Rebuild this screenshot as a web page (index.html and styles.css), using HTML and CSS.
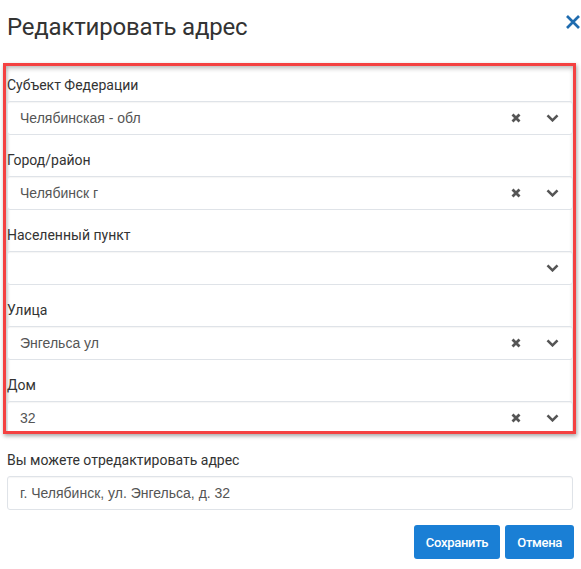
FILE: index.html
```html
<!DOCTYPE html>
<html lang="ru">
<head>
<meta charset="utf-8">
<title>Редактировать адрес</title>
<link rel="stylesheet" href="styles.css">
</head>
<body>
<div class="dialog">
  <div class="header">
    <h1 class="title">Редактировать адрес</h1>
    <button class="close" aria-label="Закрыть">
      <svg width="16" height="16" viewBox="0 0 16 16"><path d="M2 2 L14 14 M14 2 L2 14" stroke="#1f6caf" stroke-width="2.7" fill="none"/></svg>
    </button>
  </div>

  <div class="panel">
    <div class="field">
      <div class="label">Субъект Федерации</div>
      <div class="select">
        <span class="value">Челябинская - обл</span>
        <svg class="clear" width="10" height="10" viewBox="0 0 10 10"><path d="M1.5 1.5 L8.5 8.5 M8.5 1.5 L1.5 8.5" stroke="#555" stroke-width="2.8" fill="none"/></svg>
        <svg class="chev" width="13" height="8" viewBox="0 0 13 8"><path d="M1.5 1.3 L6.5 6.3 L11.5 1.3" stroke="#555" stroke-width="2.6" fill="none"/></svg>
      </div>
    </div>
    <div class="field">
      <div class="label">Город/район</div>
      <div class="select">
        <span class="value">Челябинск г</span>
        <svg class="clear" width="10" height="10" viewBox="0 0 10 10"><path d="M1.5 1.5 L8.5 8.5 M8.5 1.5 L1.5 8.5" stroke="#555" stroke-width="2.8" fill="none"/></svg>
        <svg class="chev" width="13" height="8" viewBox="0 0 13 8"><path d="M1.5 1.3 L6.5 6.3 L11.5 1.3" stroke="#555" stroke-width="2.6" fill="none"/></svg>
      </div>
    </div>
    <div class="field">
      <div class="label">Населенный пункт</div>
      <div class="select">
        <span class="value"></span>
        <svg class="chev" width="13" height="8" viewBox="0 0 13 8"><path d="M1.5 1.3 L6.5 6.3 L11.5 1.3" stroke="#555" stroke-width="2.6" fill="none"/></svg>
      </div>
    </div>
    <div class="field">
      <div class="label">Улица</div>
      <div class="select">
        <span class="value">Энгельса ул</span>
        <svg class="clear" width="10" height="10" viewBox="0 0 10 10"><path d="M1.5 1.5 L8.5 8.5 M8.5 1.5 L1.5 8.5" stroke="#555" stroke-width="2.8" fill="none"/></svg>
        <svg class="chev" width="13" height="8" viewBox="0 0 13 8"><path d="M1.5 1.3 L6.5 6.3 L11.5 1.3" stroke="#555" stroke-width="2.6" fill="none"/></svg>
      </div>
    </div>
    <div class="field">
      <div class="label">Дом</div>
      <div class="select">
        <span class="value">32</span>
        <svg class="clear" width="10" height="10" viewBox="0 0 10 10"><path d="M1.5 1.5 L8.5 8.5 M8.5 1.5 L1.5 8.5" stroke="#555" stroke-width="2.8" fill="none"/></svg>
        <svg class="chev" width="13" height="8" viewBox="0 0 13 8"><path d="M1.5 1.3 L6.5 6.3 L11.5 1.3" stroke="#555" stroke-width="2.6" fill="none"/></svg>
      </div>
    </div>
  </div>

  <div class="edit">
    <div class="label">Вы можете отредактировать адрес</div>
    <div class="input">г. Челябинск, ул. Энгельса, д. 32</div>
  </div>

  <div class="actions">
    <button class="btn">Сохранить</button>
    <button class="btn">Отмена</button>
  </div>
</div>
</body>
</html>
```

FILE: styles.css
```css
html, body {
  margin: 0;
  padding: 0;
  background: #fff;
}
body {
  font-family: Roboto, "Noto Sans", sans-serif;
  color: #333;
  width: 581px;
}
.dialog {
  display: flex;
  flex-direction: column;
}
.header {
  display: flex;
  justify-content: space-between;
  align-items: flex-start;
  padding: 12px 0 0 7px;
}
.title {
  margin: 0;
  font-size: 24px;
  line-height: 30px;
  font-weight: 400;
  letter-spacing: -0.2px;
  color: #333;
}
.close {
  margin: 2px 0 0 0;
  padding: 0;
  border: 0;
  background: none;
  width: 16px;
  height: 16px;
  display: flex;
}
.panel {
  margin: 21px 0 0 3px;
  width: 573px;
  height: 371px;
  box-sizing: border-box;
  border: 3px solid #f44141;
  box-shadow: 1px 2px 4px rgba(0,0,0,0.35), inset 0 3px 4px rgba(0,0,0,0.2), inset 2px 0 3px rgba(0,0,0,0.12);
  overflow: hidden;
  padding: 9px 0 0 1px;
  display: flex;
  flex-direction: column;
  gap: 15px;
}
.field {
  display: flex;
  flex-direction: column;
  gap: 6px;
}
.label {
  font-size: 14px;
  line-height: 20px;
  color: #333;
}
.select, .input {
  height: 34px;
  box-sizing: border-box;
  border: 1px solid #dfe3e8;
  border-radius: 3px;
  background: #fff;
  box-shadow: inset 0 1px 1px rgba(0,0,0,0.04);
  display: flex;
  align-items: center;
  padding: 0 13px 0 12px;
  font-family: "Liberation Sans", Arial, sans-serif;
  font-size: 14px;
  color: #555;
}
.value {
  flex: 1;
}
.clear {
  margin-right: 25px;
}
.edit {
  margin: 16px 8px 0 7px;
  display: flex;
  flex-direction: column;
  gap: 6px;
}
.actions {
  display: flex;
  justify-content: flex-end;
  gap: 5px;
  margin: 15px 7px 0 0;
}
.btn {
  height: 34px;
  border: 0;
  border-radius: 3px;
  background: #1a7fd5;
  color: #fff;
  font-family: Roboto, sans-serif;
  font-weight: 500;
  font-size: 13px;
  letter-spacing: -0.3px;
  padding: 0 12px;
}
```
